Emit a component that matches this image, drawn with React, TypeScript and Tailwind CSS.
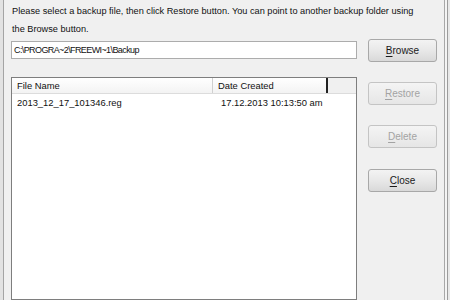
const font = { fontFamily: '"Liberation Sans", Arial, sans-serif' };

type BtnProps = { hot: string; rest: string; disabled?: boolean; className?: string };

function WinButton({ hot, rest, disabled, className }: BtnProps) {
  return (
    <button
      className={`w-[69px] h-[23px] rounded-[3px] border text-[10px] flex items-center justify-center ${
        disabled
          ? "border-[#c4c4c4] bg-gradient-to-b from-[#f4f4f4] to-[#e6e6e6] text-[#a3a3a3]"
          : "border-[#a8a8a8] bg-gradient-to-b from-[#f3f3f3] via-[#e8e8e8] to-[#d9d9d9] text-[#1a1a1a]"
      } ${className ?? ""}`}
    >
      <span className="underline underline-offset-[2px]">{hot}</span>
      <span>{rest}</span>
    </button>
  );
}

export default function App() {
  return (
    <div className="w-[450px] h-[300px] overflow-hidden bg-[#f0f0f0] flex text-[#111]" style={font}>
      <div className="w-[4px] shrink-0 h-full bg-[#e2e2e2] border-r border-[#a4a4a4]" />

      <div className="flex-1 min-w-0 flex flex-col">
        <div className="h-[39px] pl-[8px] pt-[2px] text-[9.2px] leading-[18px]">
          <p className="whitespace-nowrap">
            Please select a backup file, then click Restore button. You can point to another backup folder using
          </p>
          <p>the Browse button.</p>
        </div>

        <div className="flex flex-1 gap-[11px] pl-[7px]">
          <div className="w-[346px] flex flex-col">
            <div className="mt-[2px] h-[18px] border border-[#acacac] bg-white pl-[2px] text-[9px] tracking-[-0.6px] leading-[16px]">
              C:\PROGRA~2\FREEWI~1\Backup
            </div>

            <div className="mt-[18px] flex-1 border border-[#7e7e7e] bg-white flex flex-col text-[9.4px]">
              <div className="flex h-[16px] leading-[15px] bg-gradient-to-b from-white to-[#f3f3f3] border-b border-[#dcdcdc]">
                <div className="w-[201px] pl-[5px] border-r border-[#d0d0d0]">File Name</div>
                <div className="w-[115px] pl-[5px] border-r-2 border-[#222]">Date Created</div>
                <div className="flex-1 bg-[#f0f0f0]" />
              </div>
              <div className="flex h-[17px] leading-[17px]">
                <div className="w-[202px] pl-[5px]">2013_12_17_101346.reg</div>
                <div className="pl-[7px]">17.12.2013 10:13:50 am</div>
              </div>
            </div>
          </div>

          <div className="flex flex-col gap-[20px]">
            <WinButton hot="B" rest="rowse" />
            <WinButton hot="R" rest="estore" disabled />
            <WinButton hot="D" rest="elete" disabled />
            <WinButton hot="C" rest="lose" className="mt-[1px]" />
          </div>
        </div>
      </div>

      <div className="w-[6px] shrink-0 h-full flex">
        <div className="w-[1px] bg-[#a8a8a8]" />
        <div className="w-[2px] bg-[#f4f4f4]" />
        <div className="w-[1px] bg-[#9c9c9c]" />
        <div className="w-[2px] bg-[#e8e8e8]" />
      </div>
    </div>
  );
}
